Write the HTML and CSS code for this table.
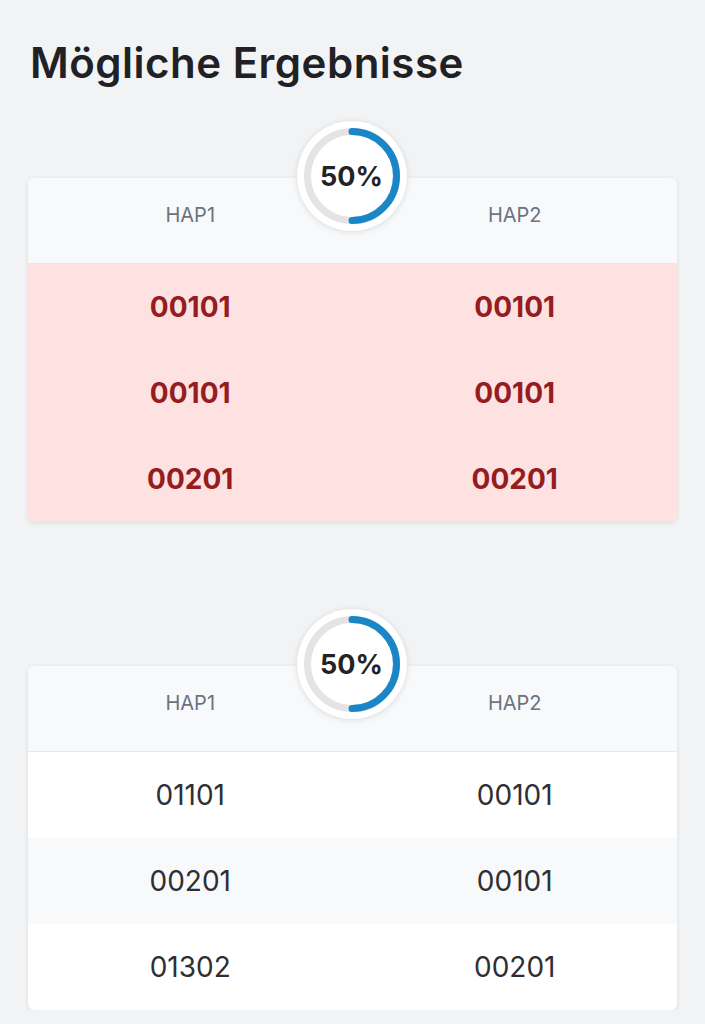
FILE: index.html
```html
<!DOCTYPE html>
<html lang="de">
<head>
<meta charset="utf-8">
<title>Mögliche Ergebnisse</title>
<link rel="stylesheet" href="styles.css">
</head>
<body>
<main class="page">
  <h1 class="title">Mögliche Ergebnisse</h1>

  <section class="result">
    <div class="badge">
      <svg class="ring" width="110" height="110" viewBox="0 0 110 110">
        <circle cx="55" cy="55" r="44.5" fill="none" stroke="#e4e4e4" stroke-width="7"/>
        <path d="M55 10.5 A44.5 44.5 0 0 1 55 99.5" fill="none" stroke="#1a86c7" stroke-width="7" stroke-linecap="round"/>
      </svg>
      <span class="badge-text">50%</span>
    </div>
    <div class="card">
      <div class="row head"><span>HAP1</span><span>HAP2</span></div>
      <div class="row match"><span>00101</span><span>00101</span></div>
      <div class="row match"><span>00101</span><span>00101</span></div>
      <div class="row match"><span>00201</span><span>00201</span></div>
    </div>
  </section>

  <section class="result second">
    <div class="badge">
      <svg class="ring" width="110" height="110" viewBox="0 0 110 110">
        <circle cx="55" cy="55" r="44.5" fill="none" stroke="#e4e4e4" stroke-width="7"/>
        <path d="M55 10.5 A44.5 44.5 0 0 1 55 99.5" fill="none" stroke="#1a86c7" stroke-width="7" stroke-linecap="round"/>
      </svg>
      <span class="badge-text">50%</span>
    </div>
    <div class="card">
      <div class="row head"><span>HAP1</span><span>HAP2</span></div>
      <div class="row"><span>01101</span><span>00101</span></div>
      <div class="row alt"><span>00201</span><span>00101</span></div>
      <div class="row"><span>01302</span><span>00201</span></div>
    </div>
  </section>
</main>
</body>
</html>
```

FILE: styles.css
```css
html, body {
  margin: 0;
  padding: 0;
  background: #f2f3f5;
  font-family: Inter, "Noto Sans", "Liberation Sans", sans-serif;
  color: #1f2023;
}

.page {
  padding: 0 28px;
}

.title {
  margin: 37px 0 0 2px;
  font-size: 42px;
  line-height: 51px;
  font-weight: 600;
  color: #1f2125;
  letter-spacing: 0.5px;
}

.result {
  position: relative;
  margin-top: 90px;
}

.result.second {
  margin-top: 144px;
}

.badge {
  position: absolute;
  left: 50%;
  top: -57px;
  margin-left: -56px;
  width: 110px;
  height: 110px;
  border-radius: 50%;
  background: #ffffff;
  box-shadow: 0 1px 6px rgba(0, 0, 0, 0.12);
  display: flex;
  align-items: center;
  justify-content: center;
  z-index: 2;
}

.ring {
  position: absolute;
  left: 0;
  top: 0;
}

.badge-text {
  position: relative;
  font-size: 27px;
  font-weight: 700;
  color: #222326;
}

.card {
  background: #ffffff;
  border-radius: 6px;
  overflow: hidden;
  box-shadow: 0 1px 4px rgba(0, 0, 0, 0.10);
}

.row {
  display: grid;
  grid-template-columns: 1fr 1fr;
  align-items: center;
  height: 86px;
  font-size: 28px;
  color: #2e2f33;
}

.row span {
  text-align: center;
}

.row.head {
  box-sizing: border-box;
  height: 86px;
  padding-bottom: 12px;
  background: #f8f9fa;
  border-bottom: 1px solid #e6e7ea;
  font-size: 20px;
  color: #6b7280;
}

.row.match {
  background: #fee2e2;
  color: #951d1f;
  font-weight: 700;
}

.row.alt {
  background: #f8f9fa;
}
```
